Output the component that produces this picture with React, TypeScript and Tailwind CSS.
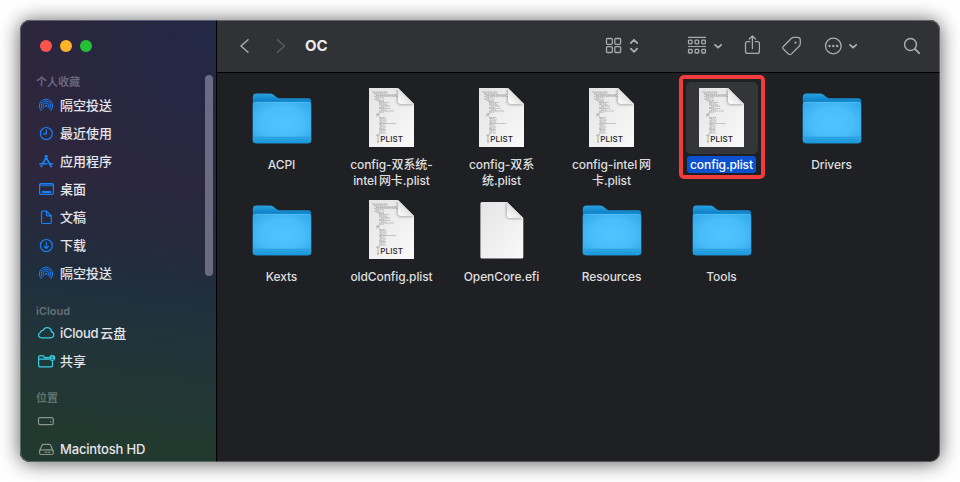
import React from "react";

const FONT = "font-['Inter','Noto_Sans_CJK_SC',sans-serif]";

type IconProps = { children: React.ReactNode; className?: string };

function SideIcon({ children, className = "text-[#1683fb]" }: IconProps) {
  return (
    <svg
      width="20"
      height="20"
      viewBox="0 0 20 20"
      fill="none"
      stroke="currentColor"
      strokeWidth="1.2"
      strokeLinecap="round"
      strokeLinejoin="round"
      className={`shrink-0 ${className}`}
    >
      {children}
    </svg>
  );
}

const AirDrop = () => (
  <SideIcon>
    <path d="M5.2 15.600A6.700 6.700 0 1 1 14.800 15.600" strokeWidth="1" />
    <path d="M6.500 14A4.700 4.700 0 1 1 13.500 14" strokeWidth="1" />
    <path d="M7.900 12.600A2.800 2.800 0 1 1 12.100 12.600" strokeWidth=".9" />
    <circle cx="10" cy="10.800" r="1.100" fill="currentColor" stroke="none" />
  </SideIcon>
);
const Clock = () => (
  <SideIcon>
    <circle cx="10.3" cy="10.5" r="6" />
    <path d="M10.3 6.8v4.1H7.3" />
  </SideIcon>
);
const Apps = () => (
  <SideIcon>
    <path d="M9.3 5l5.9 10.6M11 5L6.7 12.6M5.6 14.8l-.4.7" strokeWidth="1.8" />
    <path d="M3.8 12.8h7M13.4 12.8h2.9" strokeWidth="1.6" />
  </SideIcon>
);
const Desktop = () => (
  <SideIcon>
    <rect x="3.6" y="4.6" width="13.8" height="10.8" rx="1.3" />
    <path d="M4 6.2h13" strokeWidth="2" opacity=".65" />
    <path d="M5.9 13h9.200" strokeWidth="1.8" strokeLinecap="butt" />
  </SideIcon>
);
const Docs = () => (
  <SideIcon>
    <path d="M5.5 5.4q0-1.2 1.2-1.2h3.8l4.8 4.7v6.4q0 1.2-1.2 1.2H6.7q-1.2 0-1.2-1.2z" />
    <path d="M10.5 4.4v3.4q0 1.1 1.1 1.1h3.5" />
  </SideIcon>
);
const Download = () => (
  <SideIcon>
    <circle cx="10.3" cy="10.5" r="6" />
    <path d="M10.3 7.4v6M8.1 11.3l2.2 2.2 2.2-2.2" strokeWidth="1.1" />
  </SideIcon>
);
const Cloud = () => (
  <SideIcon className="text-[#35d0e8]">
    <path d="M5.9 14.8C4 14.8 2.5 13.8 2.5 12.1c0-1.4.9-2.3 2.1-2.6.1-1.6 1.2-2.2 2.5-2.1C7.9 5.7 9.200 4.600 11 4.600c2.400 0 4.200 1.700 4.300 4 1.500.4 2.500 1.500 2.500 3 0 1.800-1.500 3.200-3.400 3.200z" />
  </SideIcon>
);
const Shared = () => (
  <SideIcon className="text-[#35d0e8]">
    <path d="M12.600 6.600H8.600L7.500 4.900H3.800q-1.200 0-1.200 1.200v8.400q0 1.300 1.300 1.300h11.300q1.300 0 1.300-1.300v-4M2.700 8.200h10" />
    <circle cx="16.200" cy="7" r="3" fill="currentColor" stroke="none" />
    <circle cx="16.200" cy="6.200" r=".8" fill="#22343a" stroke="none" />
    <path d="M14.800 8.600q1.400-1.500 2.800 0" stroke="#22343a" strokeWidth=".8" />
  </SideIcon>
);
const Drive = () => (
  <SideIcon className="text-[#8b9390]">
    <rect x="2.500" y="6.700" width="14.800" height="7" rx="1.600" />
    <circle cx="14.700" cy="10.700" r=".7" fill="currentColor" stroke="none" />
  </SideIcon>
);
const HardDisk = () => (
  <SideIcon className="text-[#8b9390]">
    <path d="M3.700 11.400L6 6.200q.3-.8 1.200-.8h6.200q.9 0 1.200.8l2.300 5.200" />
    <rect x="3.600" y="10.800" width="13.700" height="4.700" rx="1.500" />
    <path d="M8.500 13.200h6" strokeWidth="1.600" strokeDasharray="1 .6" strokeLinecap="butt" />
  </SideIcon>
);

function SideRow({ icon, children }: { icon: React.ReactNode; children?: React.ReactNode }) {
  return (
    <div className="flex h-7 shrink-0 items-center gap-1 pl-4 text-[13px] font-medium text-[#e6e6ea]">
      {icon}
      <span className="whitespace-nowrap pt-px">{children}</span>
    </div>
  );
}

function SideHeader({ label, className }: { label: string; className: string }) {
  return (
    <div className={`flex h-4 shrink-0 items-center pl-4 text-[11px] font-semibold ${className}`}>{label}</div>
  );
}

function Sidebar() {
  return (
    <aside className="relative flex w-[196px] shrink-0 flex-col overflow-hidden bg-[#2d263c] bg-[linear-gradient(187deg,#20303a00_36%,#202d3d_57%,#21343a_72%,#22392f_92%),radial-gradient(circle_at_100%_5%,#222846_0,#22284600_200px)]">
      <div className="flex shrink-0 gap-2 pl-5 pt-5">
        <span className="size-3 rounded-full bg-[#ff534d]" />
        <span className="size-3 rounded-full bg-[#feb429]" />
        <span className="size-3 rounded-full bg-[#24c138]" />
      </div>
      <SideHeader label="个人收藏" className="mt-[22px] mb-[1px] text-[#68647a]" />
      <SideRow icon={<AirDrop />}>隔空投送</SideRow>
      <SideRow icon={<Clock />}>最近使用</SideRow>
      <SideRow icon={<Apps />}>应用程序</SideRow>
      <SideRow icon={<Desktop />}>桌面</SideRow>
      <SideRow icon={<Docs />}>文稿</SideRow>
      <SideRow icon={<Download />}>下载</SideRow>
      <SideRow icon={<AirDrop />}>隔空投送</SideRow>
      <SideHeader label="iCloud" className="mt-4 text-[#62717a]" />
      <SideRow icon={<Cloud />}>
        <span className="mr-[2px] tracking-[-0.25px]">iCloud</span>云盘
      </SideRow>
      <SideRow icon={<Shared />}>共享</SideRow>
      <SideHeader label="位置" className="mt-[15px] mb-[1px] text-[#60736f]" />
      <SideRow icon={<Drive />} />
      <SideRow icon={<HardDisk />}>
        <span className="tracking-[-0.18px]">Macintosh HD</span>
      </SideRow>
      <div className="absolute right-[3px] top-[55px] h-[201px] w-2 rounded-full bg-[#6b6a82]" />
    </aside>
  );
}

function Toolbar() {
  return (
    <header className="flex h-[53px] shrink-0 items-center border-b border-black bg-[#313236] text-[#a9aaac]">
      <svg width="74" height="52" fill="none" strokeWidth="1.500" strokeLinecap="round" strokeLinejoin="round">
        <path d="M31 19.700l-7 6.300 7 6.300" stroke="#a9aaac" />
        <path d="M60.500 19.700l7 6.300-7 6.300" stroke="#5a5b5f" />
      </svg>
      <h1 className="ml-[14px] w-[280px] text-[15px] font-bold text-[#ececed]">OC</h1>
      <svg width="354" height="52" viewBox="585 20 354 52" fill="none" stroke="currentColor" strokeWidth="1.300" strokeLinecap="round" strokeLinejoin="round">
        <rect x="606.500" y="38.500" width="5.800" height="5.800" rx="1" />
        <rect x="614.800" y="38.500" width="5.800" height="5.800" rx="1" />
        <rect x="606.500" y="46.700" width="5.800" height="5.800" rx="1" />
        <rect x="614.800" y="46.700" width="5.800" height="5.800" rx="1" />
        <path d="M630.800 43l3.200-3.200 3.200 3.200M630.800 48.700l3.200 3.200 3.200-3.200" strokeWidth="1.800" />

        <path d="M688.500 37.400h17M688.500 46.500h17" strokeWidth="1.200" />
        <rect x="688.500" y="40.200" width="3.600" height="3.600" rx=".8" />
        <rect x="695.100" y="40.200" width="3.600" height="3.600" rx=".8" />
        <rect x="701.800" y="40.200" width="3.600" height="3.600" rx=".8" />
        <rect x="688.500" y="49.400" width="3.600" height="3.600" rx=".8" />
        <rect x="695.100" y="49.400" width="3.600" height="3.600" rx=".8" />
        <rect x="701.800" y="49.400" width="3.600" height="3.600" rx=".8" />
        <path d="M715 44.800l3.100 2.900 3.100-2.900" strokeWidth="1.800" />

        <path d="M749.700 41.600h-2.200q-2 0-2 2v7.600q0 2.200 2 2.200h9.900q2 0 2-2.200v-7.600q0-2-2-2h-2.200" />
        <path d="M752.400 48.500V36.200M749.300 39l3.100-3 3.100 3" />

        <path d="M783.300 46.500l8-8q1.100-1.100 2.600-1.100h3.700q2.700 0 2.700 2.700v3.500q0 1.500-1.100 2.600l-7.700 7.700q-1.500 1.500-3 0l-5.200-4.800q-1.300-1.300 0-2.600z" />
        <circle cx="795.500" cy="42.700" r="1.100" fill="currentColor" stroke="none" />

        <circle cx="833.300" cy="46" r="7.800" />
        <g fill="currentColor" stroke="none">
          <circle cx="829.500" cy="46" r="1.200" />
          <circle cx="833.300" cy="46" r="1.200" />
          <circle cx="837.100" cy="46" r="1.200" />
        </g>
        <path d="M850 44.800l3.100 2.900 3.100-2.900" strokeWidth="1.800" />

        <circle cx="910.500" cy="44.500" r="5.900" strokeWidth="1.500" />
        <path d="M914.900 48.900l4.200 4.200" strokeWidth="2" />
      </svg>
    </header>
  );
}

function Folder() {
  return (
    <svg width="72" height="72" viewBox="0 0 72 72">
      <defs>
        <linearGradient id="folderBack" x1="0" y1="0" x2="0" y2="1">
          <stop offset="0" stopColor="#28a1e2" />
          <stop offset=".22" stopColor="#087cc2" />
          <stop offset="1" stopColor="#087cc2" />
        </linearGradient>
        <radialGradient id="folderFront" cx=".5" cy=".5" r=".75">
          <stop offset="0" stopColor="#50c4ff" />
          <stop offset=".5" stopColor="#48bdfa" />
          <stop offset="1" stopColor="#2ba2e4" />
        </radialGradient>
        <linearGradient id="folderLip" x1="0" y1="0" x2="0" y2="1">
          <stop offset="0" stopColor="#35abea" />
          <stop offset="1" stopColor="#1795da" />
        </linearGradient>
      </defs>
      <path d="M6.800 15.200q0-3.700 3.700-3.700h13.300q2 0 3.500 1.100l3.400 2.700q1.300 1 3 1h28.300q3.200 0 3.200 3.400V54H6.800z" fill="url(#folderBack)" />
      <path d="M6.800 23.200q0-3.300 3.300-3.300h51.800q3.300 0 3.300 3.300v35q0 3-3.300 3H10.100q-3.300 0-3.300-3z" fill="url(#folderFront)" />
      <path d="M6.800 55h58.400v3q0 3.200-3.300 3.200H10.100q-3.300 0-3.300-3.200z" fill="url(#folderLip)" />
      <path d="M6.800 55.200h58.400M6.800 57.800h58.400" stroke="#1c93d4" strokeWidth=".6" />
      <path d="M7.500 22q.6-1.700 2.600-1.700h51.800q2 0 2.600 1.700" stroke="#6acbfa" strokeWidth=".6" fill="none" />
    </svg>
  );
}

// Each entry is a line of the text preview: x, y, width.
const previewLines: [number, number, number][] = [
  [16, 10, 16], [18, 11.200, 13], [18, 12.300, 23], [20, 13.500, 20], [18, 14.700, 26], [20, 15.800, 8],
  [18, 17, 6], [20, 18.200, 8], [22, 19.400, 6], [23, 20.600, 10], [23, 21.800, 7], [23, 23, 9],
  [25, 24.200, 9], [23, 25.400, 6], [23, 26.600, 12], [25, 27.800, 5], [23, 29, 15], [23, 30.200, 5],
  [21, 31.400, 3], [20, 32.600, 4], [20, 33.800, 4], [23, 35.500, 7], [23, 36.700, 6], [24, 37.900, 7],
  [23, 39.100, 7], [24, 40.300, 6], [23, 41.500, 17], [23, 42.700, 6], [24, 43.900, 5], [23, 45.100, 7],
  [23, 46.300, 6], [23, 47.500, 7], [24, 48.700, 6], [23, 49.900, 6], [23, 51.100, 7], [21, 52.300, 3],
  [20, 53.500, 4], [21, 54.700, 2], [21, 55.900, 2], [21, 57.100, 2], [21, 58.300, 2], [21, 59.500, 2], [21, 60.700, 2],
];

function Sheet({ plist }: { plist?: boolean }) {
  return (
    <svg width="72" height="72" viewBox="0 0 72 72">
      <defs>
        <linearGradient id="sheet" x1="0" y1="0" x2="1" y2="1">
          <stop offset="0" stopColor="#e4e4e4" />
          <stop offset=".6" stopColor="#f1f1f1" />
          <stop offset="1" stopColor="#fafafa" />
        </linearGradient>
        <linearGradient id="curl" x1="0" y1="1" x2="1" y2="0">
          <stop offset="0" stopColor="#ffffff" />
          <stop offset=".5" stopColor="#e2e2e2" />
        </linearGradient>
        <filter id="curlShadow" x="-50%" y="-50%" width="200%" height="200%">
          <feGaussianBlur stdDeviation="1.500" />
        </filter>
        <clipPath id="sheetClip">
          <path d="M13 6h29l16 16v43H13z" />
        </clipPath>
        <clipPath id="blankClip">
          <path d="M14.400 8h26.600l16.300 16v40.500H14.400z" />
        </clipPath>
      </defs>
      {plist ? (
        <>
          <path d="M13 6h29l16 16v43H13z" fill="url(#sheet)" />
          <g clipPath="url(#sheetClip)">
            {previewLines.map(([x, y, w]) => (
              <path key={y} d={`M${x} ${y}h${w}`} stroke="#777" strokeWidth=".6" strokeDasharray="3 .5 2 .4" opacity=".7" />
            ))}
            <path d="M41.500 6v13.500q0 3 3 3h14z" fill="#000" opacity=".38" filter="url(#curlShadow)" />
          </g>
          <path d="M42 6v13q0 3 3 3h13z" fill="url(#curl)" />
          <text x="24.300" y="60" className="fill-[#1c1c1c] font-['Inter',sans-serif] text-[8px] font-medium" textLength="22.800">
            PLIST
          </text>
        </>
      ) : (
        <>
          <path d="M15.500 8h25.500L57.300 24v39q0 1.500-1.500 1.500H15.900q-1.500 0-1.500-1.500V9.500Q14.400 8 15.900 8z" fill="url(#sheet)" />
          <g clipPath="url(#blankClip)">
            <path d="M40.500 8v13.500q0 3 3 3h14z" fill="#000" opacity=".35" filter="url(#curlShadow)" />
          </g>
          <path d="M41 8v13.200q0 2.800 2.800 2.800h13.500z" fill="url(#curl)" />
        </>
      )}
    </svg>
  );
}

// A name is split into display lines; each line into same-script runs.
type FileEntry = { kind: "folder" | "plist" | "blank"; lines: string[][]; selected?: boolean };

const files: FileEntry[] = [
  { kind: "folder", lines: [["ACPI"]] },
  { kind: "plist", lines: [["config-双系统-"], ["intel", "网卡.plist"]] },
  { kind: "plist", lines: [["config-双系"], ["统.plist"]] },
  { kind: "plist", lines: [["config-intel", "网"], ["卡.plist"]] },
  { kind: "plist", lines: [["config.plist"]], selected: true },
  { kind: "folder", lines: [["Drivers"]] },
  { kind: "folder", lines: [["Kexts"]] },
  { kind: "plist", lines: [["oldConfig.plist"]] },
  { kind: "blank", lines: [["OpenCore.efi"]] },
  { kind: "folder", lines: [["Resources"]] },
  { kind: "folder", lines: [["Tools"]] },
];

function FileTile({ file }: { file: FileEntry }) {
  return (
    <div className="relative flex h-28 w-[110px] flex-col items-center">
      <div className={`size-[72px] rounded-[5px] ${file.selected ? "bg-[#343539]" : ""}`}>
        {file.kind === "folder" ? <Folder /> : <Sheet plist={file.kind === "plist"} />}
      </div>
      <div
        className={`mt-[2px] mr-px whitespace-nowrap rounded-[3px] px-[3px] pt-px text-center text-[12px] font-medium leading-4 tracking-[-0.1px] ${
          file.selected ? "bg-[#0a50cf] text-white" : "text-[#dededf]"
        }`}
      >
        {file.lines.map((runs) => (
          <div key={runs[0]} className="flex justify-center gap-[2px]">
            {runs.map((run) => (
              <span key={run}>{run}</span>
            ))}
          </div>
        ))}
      </div>
      {file.selected && (
        <div className="absolute -top-[7px] left-[12px] h-[104px] w-[86px] rounded-[5px] border-4 border-[#f23b3b]" />
      )}
    </div>
  );
}

export default function App() {
  return (
    <div className={`h-[482px] w-[960px] overflow-hidden bg-white p-5 ${FONT}`}>
      <div className="relative flex h-[442px] w-[920px] overflow-hidden rounded-[10px] bg-[#1f2023] shadow-[0_1px_20px_rgba(0,0,0,0.65)]">
        <Sidebar />
        <main className="flex flex-1 flex-col border-l border-black">
          <Toolbar />
          <div className="grid grid-cols-[repeat(6,110px)] pl-[10px] pt-[9px]">
            {files.map((file) => (
              <FileTile key={file.lines.flat().join("")} file={file} />
            ))}
          </div>
        </main>
        <div className="pointer-events-none absolute inset-0 rounded-[10px] border border-white/25" />
      </div>
    </div>
  );
}
